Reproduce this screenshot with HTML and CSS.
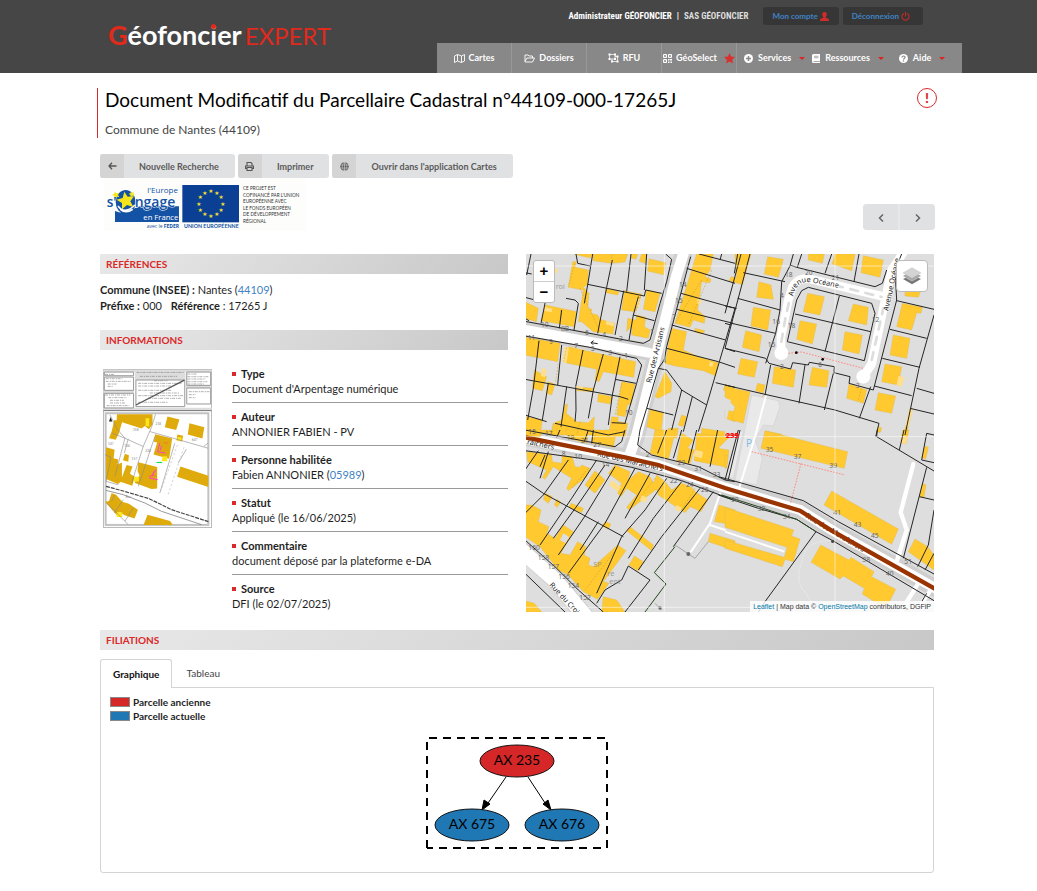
FILE: index.html
```html
<!DOCTYPE html>
<html lang="fr">
<head>
<meta charset="utf-8">
<title>Géofoncier Expert</title>
<link rel="stylesheet" href="styles.css">
</head>
<body>
<header class="site-header">
  <a class="logo" href="#"><span class="logo-g">G</span><span class="logo-name">éofonc<span class="logo-i">i</span>er</span><span class="logo-expert">EXPERT</span></a>
  <div class="header-right">
    <div class="account">
      <span class="user"><b>Administrateur GÉOFONCIER</b><b>|</b><span class="company">SAS GÉOFONCIER</span></span>
      <a class="account-btn" href="#">Mon compte <svg viewBox="0 0 16 16" width="9" height="9"><path fill="#d02c2c" d="M8 0c3 0 4 2 4 4.500 0 2-1 4-2 4.500v1l4 1.500c1.500.5 2 2 2 4.500H0c0-2.500.5-4 2-4.500L6 10V9C5 8.500 4 6.500 4 4.500 4 2 5 0 8 0z"/></svg></a>
      <a class="account-btn" href="#">Déconnexion <svg viewBox="0 0 16 16" width="9" height="9"><path fill="none" stroke="#c42a2a" stroke-width="2" d="M5 2.500a6.300 6.300 0 1 0 6 0M8 0v8"/></svg></a>
    </div>
    <nav class="main-nav">
      <a class="tile" href="#"><svg viewBox="0 0 22 18" width="11" height="9"><path fill="none" stroke="#fff" stroke-width="1.800" d="M1 4l6-3v13l-6 3zM7 1l8 3v13l-8-3M15 4l6-3v13l-6 3"/></svg>Cartes</a>
      <a class="tile" href="#"><svg viewBox="0 0 22 18" width="11" height="9"><path fill="none" stroke="#fff" stroke-width="1.800" d="M2 15V2h6l2 2h7v4M2 15l4-7h15l-4 8H2z"/></svg>Dossiers</a>
      <a class="tile" href="#"><svg viewBox="0 0 22 20" width="11" height="10"><path fill="none" stroke="#fff" stroke-width="1.500" d="M3 3h11v9H3zM14 7h5v10H8v-5"/><path fill="#fff" d="M1 1h4v4H1zM12 1h4v4h-4zM1 10h4v4H1zM12 10h4v4h-4zM17 5h4v4h-4zM17 15h4v4h-4zM6 15h4v4H6z"/></svg>RFU</a>
      <a class="tile" href="#"><svg viewBox="0 0 18 18" width="9" height="9"><path fill="none" stroke="#fff" stroke-width="2" d="M1 1h6v6H1zM11 1h6v6h-6zM1 11h6v6H1z"/><path fill="#fff" d="M3 3h2v2H3zM13 3h2v2h-2zM3 13h2v2H3zM10 10h3v3h-3zM14 10h4v3h-4zM10 15h3v3h-3zM15 15h3v3h-3z"/></svg>GéoSelect<svg class="star" viewBox="0 0 20 20" width="11" height="11"><path fill="#d6302f" d="M10 0l3 6.500 7 .8-5.200 4.900L16.200 19 10 15.600 3.800 19l1.400-6.800L0 7.300l7-.8z"/></svg></a>
      <a class="drop" href="#"><svg viewBox="0 0 18 18" width="9" height="9"><circle cx="9" cy="9" r="9" fill="#fff"/><path stroke="#888" stroke-width="3" d="M9 4v10M4 9h10"/></svg>Services<i class="caret"></i></a>
      <a class="drop" href="#"><svg viewBox="0 0 16 18" width="8" height="9"><path fill="#fff" d="M3 0h13v13l-1 1v2l1 1v1H3q-3 0-3-3V3q0-3 3-3z"/><path stroke="#888" stroke-width="1.400" d="M4 4.500h9M4 7.500h9M3 15h11"/></svg>Ressources<i class="caret"></i></a>
      <a class="drop help" href="#"><svg viewBox="0 0 18 18" width="9" height="9"><circle cx="9" cy="9" r="9" fill="#fff"/><path fill="none" stroke="#888" stroke-width="2.400" d="M6 7c0-4 6.500-4 6 0 0 2-3 2-3 4M9 12.500V15"/></svg>Aide<i class="caret"></i></a>
    </nav>
  </div>
</header>

<main class="page">
  <div class="title-row">
    <div class="title-block">
      <h1>Document Modificatif du Parcellaire Cadastral n°44109-000-17265J</h1>
      <p>Commune de Nantes (44109)</p>
    </div>
    <button class="alert" aria-label="Signaler">!</button>
  </div>

  <div class="actions">
    <button class="action"><span class="action-icon"><svg viewBox="0 0 18 16" width="9" height="8"><path fill="none" stroke="#555" stroke-width="2.600" d="M17 8H2M8 1.500L2 8l6 6.500"/></svg></span><span class="action-label">Nouvelle Recherche</span></button>
    <button class="action"><span class="action-icon"><svg viewBox="0 0 18 18" width="9" height="9"><path fill="none" stroke="#555" stroke-width="2.200" d="M4 8V1h8l2 2v5M4 13H1V8h16v5h-3M4 11h10v6H4z"/></svg></span><span class="action-label">Imprimer</span></button>
    <button class="action"><span class="action-icon"><svg viewBox="0 0 18 18" width="9" height="9"><circle cx="9" cy="9" r="8.500" fill="#5a5a5a"/><path fill="none" stroke="#d4d4d4" stroke-width="1.200" d="M0 6h18M0 12h18M9 0v18M9 0C3 5 3 13 9 18c6-5 6-13 0-18"/></svg></span><span class="action-label">Ouvrir dans l'application Cartes</span></button>
  </div>

  <div class="partner-row">
    <svg class="partner" viewBox="42 99 606 159" role="img" aria-label="L'Europe s'engage en France avec le FEDER">
      <rect x="42" y="99" width="606" height="159" fill="#fdfefb"/>
      <path fill="#1352a5" d="M75 198Q105 211 134 190L150 184H267V231H75z"/>
      <ellipse cx="107" cy="171" rx="30" ry="36" fill="#1352a5"/>
      <path fill="none" stroke="#fff" stroke-width="5" d="M84 183Q104 210 135 180M91 193Q108 207 128 193"/>
      <path fill="#f5e51b" d="M103 140l10 15 19-1-11 15 9 17-19-6-15 13 0-19-17-10 19-5z"/>
      <path fill="#f5e51b" d="M74 140l5 5 8-2-3 7 4 6-8-1-5 6-2-8-7-4 7-3zM122 139l4 4 6-1-2 6 3 5-6-1-5 4-1-6-5-4 6-2z"/>
      <g font-family="Open Sans, sans-serif" fill="#1352a5">
        <text x="172" y="143" font-size="24">l'Europe</text>
        <text x="50" y="187" font-size="41" font-weight="600">s'</text>
        <text x="134" y="187" font-size="42" font-weight="600" stroke="#fdfefb" stroke-width="3" paint-order="stroke">ngage</text>
        <text x="160" y="224" font-size="23" fill="#fff">en France</text>
        <text x="170" y="249" font-size="15">avec le <tspan font-weight="bold">FEDER</tspan></text>
        <text x="282" y="250" font-family="Lato, sans-serif" font-size="16" font-weight="bold">UNION EUROPÉENNE</text>
      </g>
      <rect x="277" y="120" width="170" height="112" fill="#0b3f94"/>
      <g fill="#f7e52a" font-size="17" font-family="DejaVu Sans, sans-serif" text-anchor="middle">
        <text x="362" y="145">★</text><text x="380" y="150">★</text><text x="393" y="163">★</text><text x="398" y="182">★</text><text x="393" y="200">★</text><text x="380" y="213">★</text><text x="362" y="218">★</text><text x="344" y="213">★</text><text x="331" y="200">★</text><text x="326" y="182">★</text><text x="331" y="163">★</text><text x="344" y="150">★</text>
      </g>
      <g font-family="Lato, sans-serif" font-size="14" fill="#333">
        <text x="459" y="135">CE PROJET EST</text><text x="459" y="155">COFINANCÉ PAR L'UNION</text><text x="459" y="174">EUROPÉENNE AVEC</text><text x="459" y="194">LE FONDS EUROPÉEN</text><text x="459" y="213">DE DÉVELOPPEMENT</text><text x="459" y="233">RÉGIONAL</text>
      </g>
    </svg>
    <div class="pager">
      <button aria-label="Précédent"><svg viewBox="0 0 12 16" width="6" height="8"><path fill="none" stroke="#666" stroke-width="3" d="M10 1L3 8l7 7"/></svg></button>
      <button aria-label="Suivant"><svg viewBox="0 0 12 16" width="6" height="8"><path fill="none" stroke="#666" stroke-width="3" d="M2 1l7 7-7 7"/></svg></button>
    </div>
  </div>

  <div class="columns">
    <div class="details">
      <h2>RÉFÉRENCES</h2>
      <div class="refs">
        <p><b>Commune (INSEE) :</b> Nantes (<a href="#">44109</a>)</p>
        <p><b>Préfixe :</b> 000 <span class="ref"><b>Référence</b> : 17265 J</span></p>
      </div>
      <h2>INFORMATIONS</h2>
      <div class="info">
        <svg class="thumb" viewBox="24 27 328 478" role="img" aria-label="Aperçu du document">
          <rect x="25" y="28" width="326" height="476" fill="#fff" stroke="#bbb" stroke-width="4"/>
          <path fill="#ddd" d="M25 29h326v7H25zM25 90h92v10H25zM120 36h152v24H120zM25 143h326v10H25zM273 76h76v8h-76z"/>
          <path fill="none" stroke="#999" stroke-width="3" d="M28 36h88v11H28zM28 51h88v40H28zM28 100h88v44H28zM123 60h147v80H123zM276 36h72v40h-72zM276 84h72v48h-72z"/>
          <path fill="none" stroke="#888" stroke-width="2" stroke-dasharray="9 3 4 2" d="M30 43h28M32 56h50M32 64h75M38 72h30M38 79h15M30 105h76M40 113h55M45 121h42M45 129h45M35 137h68M125 37h142M135 49h112M178 62h40M130 70h130M130 78h98M130 91h100M165 99h90M130 107h135M160 115h98M130 127h90M278 42h30M278 50h66M278 57h55M278 65h60M278 72h50M282 95h62M282 104h20M282 113h20"/>
          <path stroke="#555" stroke-width="4" d="M123 135L269 60"/><path stroke="#777" stroke-width="3" d="M25 152h326"/>
          <rect x="32" y="160" width="309" height="336" fill="#fff" stroke="#c2c2c2" stroke-width="6"/>
          <path fill="#dfaa0c" d="M66 163h107v30l-11 15-12-10-10 8-75-24zM58 180l24 5-10 35-10 20-20-5 8-20zM33 262l26 8-3 25 14 4-2 15 13-6v55l-12 10-36-15zM90 282l12 4-2 20-16-5zM95 316l18 4-8 22 15 9-8 27-36-12zM130 307l57 15v64l-17 2-50-18 2-10 12-12-6-14zM218 170l36 9-10 31-34-8zM284 190l45 12-6 34-44-12zM248 224l17 4-3 17-17-4zM181 223l51 13-9 61-47-13 11-36-10-2zM257 320l84 28v34l-94-31zM50 400l14 6 18 20 20 6 27 18-10 27-30-10-15-10-9 9-35-40 12-2zM158 465l68 19 8 12h-88z"/>
          <path fill="#ffe619" d="M152 175h11v24h-11zM118 351h14v14h-16zM203 289h14v15h-16zM65 458h17v14H65zM248 232h12v10h-12z"/>
          <path fill="none" stroke="#888" stroke-width="1.800" d="M45 165L67 208 90 235 145 260 170 202 182 163M52 220L90 235 60 350M145 260L110 370M180 230L130 380M165 215L340 265M30 285L48 292 33 365 70 375M240 250L195 400M340 250L327 260M100 237L88 280M60 405L50 425M85 420L58 460M115 445L90 485M35 430L100 495M275 268L250 310"/>
          <path fill="none" stroke="#444" stroke-width="3.500" stroke-dasharray="12 3" d="M33 380L82 393 163 417 230 450 341 486"/>
          <path fill="none" stroke="#666" stroke-width="2" d="M33 392L85 405 150 430 200 455 320 495"/>
          <path fill="none" stroke="#aaa" stroke-width="1.500" stroke-dasharray="7 6" d="M248 255L198 393M268 262L218 410"/>
          <path fill="none" stroke="#ff40c9" stroke-width="3" d="M195 250l-7 26 25 4M184 330l-20 25 25 5M200 258l-4 14M178 334l-5 17"/><path stroke="#f63" fill="none" stroke-width="2" d="M205 249h15M160 348h25"/><path stroke="#0d3" stroke-width="3" d="M185 308h17"/>
          <g fill="#888" font-size="10" font-family="Lato, sans-serif"><text x="182" y="195">234</text><text x="114" y="213">158</text><text x="88" y="262">156</text><text x="110" y="300">157</text><text x="151" y="276">238</text><text x="291" y="243">647</text><text x="39" y="256">147</text><text x="92" y="416">Rue</text></g>
          <path fill="#222" d="M47 171l5 14h-10z"/>
        </svg>
        <dl>
          <div><dt>Type</dt><dd>Document d'Arpentage numérique</dd></div>
          <div><dt>Auteur</dt><dd>ANNONIER FABIEN - PV</dd></div>
          <div><dt>Personne habilitée</dt><dd>Fabien ANNONIER (<a href="#">05989</a>)</dd></div>
          <div><dt>Statut</dt><dd>Appliqué (le 16/06/2025)</dd></div>
          <div><dt>Commentaire</dt><dd>document déposé par la plateforme e-DA</dd></div>
          <div><dt>Source</dt><dd>DFI (le 02/07/2025)</dd></div>
        </dl>
      </div>
    </div>

    <div class="map">
      <svg class="map-canvas" viewBox="3 12 1224 1074" preserveAspectRatio="xMidYMid slice" role="img" aria-label="Plan cadastral">
        <rect x="0" y="0" width="1240" height="1100" fill="#dedede"/>
        <g class="verge">
          <path d="M482 -10L455 75 400 290 335 555 312 620M-10 237L370 305M-10 559L300 622 400 645 600 713 825 780 920 840 1240 1020M-20 890L90 990 190 1110"/>
        </g>
        <path class="lot" d="M680 435L760 452 765 470 745 528 715 525 690 570 712 625 695 705 630 690zM640 540L655 545 625 685 605 680z"/>
        <g class="road">
          <path stroke-width="32" d="M482 -10L455 75 400 290 335 555 312 620"/>
          <path stroke-width="30" d="M-10 238L370 308"/>
          <path stroke-width="30" d="M-10 561L300 622 400 645 600 713 825 780 920 840 1240 1020"/>
          <path stroke-width="46" d="M-20 893L90 990 190 1110"/>
          <path stroke-width="26" d="M768 310L768 260 790 150 802 112Q820 78 860 88L1078 140M1015 380L1040 342 1075 175 1100 60 1140 0"/>
          <path stroke-width="13" d="M1165 642L1127 787 1145 840 1115 935M1180 1000L1130 1080M1220 1015L1190 1060"/>
          <path stroke-width="6" d="M722 440L690 560 643 712M585 730L555 820 498 905M555 825L600 840"/>
        </g>
        <circle cx="769" cy="309" r="21" fill="#fff"/><circle cx="1015" cy="380" r="21" fill="#fff"/>
        <path fill="none" stroke="#ddd" stroke-width="8" stroke-linecap="round" stroke-dasharray="24 23" d="M769 275L782 200 796 140M930 106L1070 141M1040 330L1075 175"/>
        <g class="bld">
          <path d="M148 12H202L196 24 160 16zM204 12H262L258 40 204 32zM256 12H308L300 36 264 40zM320 12H338L333 28 318 24zM350 12H365L360 40 343 34zM372 26L422 38 415 74 368 63zM143 35H154L150 52 190 60 187 104 175 112 192 130 188 175 200 178 198 190 218 195 225 208 268 220 264 252 205 245 170 215 160 215 175 120 130 112z"/>
          <path d="M298 122L348 132 342 160 330 185 290 180zM365 120L405 130 390 185 355 178zM335 195L362 202 358 230 375 240 370 265 320 255 320 228 305 245 308 205 332 210zM243 115L282 125 278 135 243 128zM0 155L40 175 34 215 0 205zM62 165L155 185 148 230 48 212z"/>
          <path d="M515 12H565L555 60 540 80 558 88 555 98 530 95 518 180 540 200 538 220 505 210 495 232 450 220zM440 235L485 245 475 300 520 320 580 338 572 378 535 362 450 348 420 340zM510 235L540 242 532 252 510 246z"/>
          <path d="M0 262L105 280 98 335 0 315zM130 290L332 335 326 382 235 365 222 395 210 390 215 358 120 338zM28 360L65 380 52 422 22 415zM68 395L90 402 80 435 65 430zM155 410L205 415 203 425 155 422zM220 432L262 440 255 462 218 455zM290 395L330 402 318 465 308 462 300 500 275 495 280 460z"/>
          <path d="M120 465L128 462 124 490 155 515 190 518 208 500 205 555 80 555 85 520 110 510zM0 500L52 510 45 560H0zM260 500L280 502 278 514 308 520 300 560H250zM420 365L440 400 438 425 400 445 390 440zM375 478L415 488 408 545 365 530zM470 495L485 500 475 530 460 525zM430 535H460L455 565 430 560zM530 535L600 545 595 565 530 560zM600 405L630 412 620 430 595 420zM600 480L630 485V515L600 505z"/>
        </g>
        <g class="bld" transform="translate(600 0)">
          <path d="M30 12H78L52 104 12 92 18 80 35 83zM128 20L175 28 160 82 118 72zM102 95L138 105 145 148 95 142zM85 172L137 180 128 240 78 228zM62 242L110 255 102 305 52 292zM48 325L98 335 88 382 38 372zM250 12H298L292 40 250 30zM330 12H390L380 62 322 42zM415 17L475 30 465 82 408 68z"/>
          <path d="M248 130L298 140 285 195 235 185zM225 212L275 222 262 282 215 268zM385 162L430 172 425 225 370 212zM360 245L412 255 402 312 352 300zM540 115L588 120 580 142 540 138zM532 160L592 172 588 190 575 188 560 240 515 230zM505 255L555 265 545 325 495 315zM480 342L530 350 520 405 470 395zM460 428L512 438 500 490 450 480zM148 350L212 360 205 412 142 400zM262 352L312 362 305 412 252 405zM372 402L425 420 415 460 365 445zM98 400L120 405 115 430 92 422zM0 410L75 425 55 520 20 510 30 470 0 440zM555 475L562 480 545 550 538 545zM122 543L170 553V558H120zM460 530L470 533 465 548 460 545z"/>
        </g>
        <g class="bld" transform="translate(0 540)">
          <path d="M0 0H105L102 15 50 8 45 22 0 8zM120 0H275L265 52 200 40 205 0 190 0 185 40 130 25zM390 0H452L430 88 375 70zM470 10L505 30 488 55 508 60 495 102 455 95zM515 10L612 22 580 55 612 60 605 112 508 92z"/>
          <path d="M5 65L80 75 82 95 110 100 112 75 142 82 150 110 165 112 170 105 195 115 185 140 130 182 125 175 140 145 100 120 85 110 60 148 52 142 65 120 8 95zM210 122L240 150 210 190 180 165zM270 105L315 125 310 150 340 125 375 140 385 160 395 135 420 155 440 180 470 160 500 172 510 185 548 210 528 245 495 230 480 248 400 195 395 178 365 200 312 240 305 232 335 195 305 175 288 200 278 190 290 160 250 130zM62 190L82 200 70 220 55 208zM95 208L107 215 97 232 88 225zM138 220L175 235 170 248 132 232zM240 275L258 282 250 298 232 288zM315 290L385 345 380 362 305 302zM328 378L355 395 340 424 312 405z"/>
          <path d="M0 225H20L48 240 40 275 72 290 65 310 90 325 115 285 145 305 130 330 108 370 135 375 158 335 182 350 178 375 195 385 190 405 205 410 278 345 303 362 235 455 252 460 218 508 175 485 130 435 100 420 45 350 0 320zM235 500L275 510 300 546H230zM0 512L28 520 50 546H0zM582 225L630 240V285L568 275zM555 310L630 332V362L550 335z"/>
        </g>
        <g class="bld" transform="translate(600 540)">
          <path d="M120 2L368 65 358 115 108 55zM320 183L520 297 500 343 297 225zM0 232L206 300 200 318 225 327 205 395 180 388 172 410 0 355V330L178 382 186 352 0 292zM287 345L372 390 378 382 447 425 440 440 512 478 490 522H460L412 492 418 475 355 438 345 447 258 397zM570 327L608 350 627 375V420L550 365zM533 0H552L543 42 527 38zM600 48L610 52 602 88 590 82zM592 160L603 165 597 202 585 200zM0 75L10 77 5 115H0zM455 0H468L465 7 455 5z"/>
        </g>
        <path fill="none" stroke="#fff" stroke-width="6" d="M600 845L778 905"/>
        <path fill="#dedede" d="M128 115L150 118 155 130 130 128zM105 870L115 850 132 860 122 880zM210 515L250 525 235 540 208 535zM600 445L618 450 605 510 600 505z"/>
        <path fill="#ffdf8c" d="M60 172L82 176 80 187 58 183zM118 290L132 293 124 340 112 336zM50 355L65 358 60 382 48 378zM335 145L347 148 342 172 333 170zM244 213L268 219 265 229 242 223zM155 407L175 412 170 420 153 416zM518 145L530 148 527 163 515 160zM555 335L566 338 562 350 552 348zM260 690L288 712 278 725 252 705zM512 600L535 605 530 625 506 618zM350 735L368 745 360 758 345 750zM455 765L472 775 462 785 450 778zM1120 378L1138 382 1130 410 1115 406zM1155 475L1164 480 1150 530 1140 528zM85 55L100 58 95 70 82 67zM1130 558L1148 562 1143 582 1127 578z"/>
        <path fill="none" stroke="#c49b2d" stroke-width="1.500" stroke-dasharray="6 4" d="M165 115L225 245M42 275L36 320M125 292L116 335M175 300L165 350M232 312L220 365M285 325L275 375M100 340L92 395M350 130L330 190M560 60L490 225M530 90L450 220M85 520L75 560M165 515L155 555M290 400L270 495M150 40L130 110M108 180L105 220M215 545L204 580M140 620L100 665M190 655L140 715M390 685L320 775M510 715L470 780M280 890L180 1020M1010 415L1000 450M725 430L712 440"/>
        <g class="parcels">
          <path d="M18 12L5 75M78 70L48 220M48 155L0 142M0 68L20 72M153 12L158 40 195 48M203 12L188 105 178 160M188 103L358 138 362 120 410 130M262 30L245 112 218 250M318 12L305 125M365 12L358 120M296 122L270 255M340 140L325 195 312 270M325 195L388 212M422 12L440 28 425 95 405 160 375 270 355 280 310 272 205 252 0 214M123 145L150 150 160 160 147 240M110 180L103 235M0 205L12 212M0 258L195 292 290 315 335 325 350 345 335 400 300 520M42 272L25 415 8 510M110 285L98 405M174 300L152 410M235 312L205 420 190 505M285 320L262 435 250 525M0 388L110 408 285 440 310 448M270 388L333 400M125 410L108 530M152 412L153 480 150 515M70 400L52 510M260 518L302 520M90 520L250 555 300 545"/>
          <path d="M497 20L425 290 418 330 400 355 425 360 470 420 545 465M522 12L630 40M485 55L630 100M468 130L630 175M455 178L625 220M440 225L602 270M425 295L580 335 630 352M630 175L545 465 520 545M470 420L440 540M365 475L445 495M502 440L475 545M400 355L365 475 345 540M572 398L630 412M590 12L585 30M600 295L630 305M640 0L628 70M0 495L65 515"/>
          <path transform="translate(600 0)" d="M48 12L0 190M75 12L0 295M55 68L180 95M38 145L165 180M20 220L152 250M0 295L122 325 132 340 197 357 203 338 250 345 253 337 328 350 327 368 375 380 372 400 445 420M205 12L195 48 170 95 165 180 152 250 122 340M195 45L215 52 450 110 472 100 485 60M230 12L217 52M320 12L300 70M402 12L387 95M530 12L510 60 515 150 445 420M515 152L627 178M495 238L605 265M472 325L585 352M448 408L560 437M250 112L230 122 215 150 187 275 418 332 450 190 440 160 420 155 250 112M343 138L300 305M210 192L437 245M0 405L120 433 330 480 462 520 452 560M137 345L120 435M240 345L222 460M325 370L298 480M437 410L403 505M627 195L582 355 540 555M575 415L627 430M555 475L627 492M0 168L35 175M0 220L18 225"/>
          <path transform="translate(0 540)" d="M0 62L205 90 320 112 425 140 470 152 545 180 630 212M130 90L55 195 0 250M40 62L0 120M60 75L45 110M215 90L140 205 45 345M240 105L165 215 85 325M270 110L180 258 100 375M330 115L240 280 130 430M375 130L300 265M425 145L360 240 290 320 215 490M470 155L385 265 310 385M525 175L410 320 340 420M565 185L445 350M0 152L55 190 295 320M220 275L165 360M310 408L375 450M310 408L290 450 240 480 215 520M0 330L95 415 160 480 235 546M375 450L300 546M345 0L338 45 380 75 520 110 600 150M300 0L290 35 270 50 0 0M105 0L95 22M190 0L178 35M205 0L200 40M70 65L45 145M425 0L398 70M470 0L445 85M515 0L490 100M578 0L555 110M640 0L600 150 630 155M0 430L120 546"/>
          <path transform="translate(600 540)" d="M-20 140L10 148 235 212 340 275 627 432M10 148L45 0M273 305L120 515 100 546M-20 195L100 235 215 268 273 305 325 333 430 395 627 512M457 0L455 20 627 123M537 0L523 60M605 112L535 385M583 200L627 210M627 15L605 10 590 90 627 98M627 240L610 345 578 410M627 370L600 420M605 490L590 515"/>
        </g>
        <path fill="none" stroke="#23471d" stroke-width="3" d="M450 890L388 968 423 1002 360 1086M590 735L700 770 815 808 873 845"/>
        <path fill="none" stroke="#888" stroke-width="2" d="M450 885L510 925 550 875M390 1060L410 1080"/>
        <path fill="none" stroke="#fff" stroke-width="3" stroke-dasharray="2 5" d="M930 873Q845 865 832 930 810 990 835 1020L860 1055 900 1065"/>
        <path fill="none" stroke="#ff8a80" stroke-width="3" stroke-dasharray="5 4" d="M680 605L960 675M828 640L797 758M790 310L830 306 1015 355"/>
        <circle cx="814" cy="308" r="4"/><circle cx="893" cy="328" r="4"/><circle cx="923" cy="874" r="5" fill="#444"/><circle cx="490" cy="912" r="6" fill="#666"/><circle cx="405" cy="1074" r="5" fill="#666"/>
        <g class="street-label">
          <text x="5" y="582" transform="rotate(12 5 582)">raîchers</text>
          <text x="215" y="618" transform="rotate(13 215 618)">Rue des Maraîchers</text>
          <text x="840" y="802" transform="rotate(31 840 802)">Rue des Maraîchers</text>
        </g>
        <path fill="none" stroke="#993300" stroke-width="13" d="M-10 560L300 622 400 645 600 714 825 782 920 842 1240 1022"/>
        <g class="street-label">
          <text x="378" y="400" transform="rotate(-76 378 400)">Rue des Artisans</text>
          <text x="72" y="1006" transform="rotate(47 72 1006)">Rue du Croi</text>
          <path id="oceane" fill="none" stroke="none" d="M805 140Q812 90 860 97L990 124"/>
          <text><textPath href="#oceane">Avenue Océane</textPath></text>
          <text x="1090" y="184" transform="rotate(-78 1090 184)">Avenue Océane</text>
        </g>
        <path fill="none" stroke="#222" stroke-width="3" d="M218 281L198 278M206 272L198 278 204 284"/>
        <g class="numbers">
          <text x="48" y="232">10</text><text x="108" y="243">8B</text><text x="180" y="254">6</text><text x="232" y="262">4</text><text x="282" y="274">2</text><text x="8" y="270">11</text><text x="72" y="281">9</text><text x="148" y="294">7</text><text x="198" y="303">5</text><text x="250" y="314">3</text><text x="298" y="324">1</text><text x="300" y="495">10</text><text x="375" y="252">1</text><text x="462" y="110">14</text><text x="450" y="160">15</text><text x="442" y="208">7</text><text x="412" y="338">4</text>
          <text x="10" y="553">15</text><text x="60" y="558">17</text><text x="125" y="570">19</text><text x="168" y="580">21</text><text x="205" y="592">27</text><text x="110" y="618">8</text><text x="148" y="626">10</text><text x="230" y="652">14</text><text x="435" y="698">22</text><text x="483" y="712">24</text><text x="528" y="727">26</text><text x="618" y="757">30</text><text x="698" y="782">32</text><text x="773" y="806">34</text><text x="458" y="646">29</text><text x="508" y="663">31</text><text x="563" y="680">33</text><text x="362" y="622">2</text>
          <text x="722" y="607">35</text><text x="806" y="628">37</text><text x="913" y="653">39</text><text x="925" y="794">41</text><text x="986" y="832">43</text><text x="1038" y="864">45</text><text x="1138" y="943">51</text><text x="1012" y="936">38</text><text x="1083" y="977">40</text>
          <text x="780" y="82">18</text><text x="840" y="74">20</text><text x="920" y="90">21</text><text x="765" y="145">4</text><text x="742" y="222">16</text><text x="728" y="292">15</text><text x="788" y="235">18</text><text x="1040" y="215">12</text><text x="765" y="356">2</text><text x="880" y="350">6</text><text x="992" y="415">3</text>
          <text x="10" y="900">160</text><text x="38" y="930">158</text><text x="68" y="958">157</text><text x="100" y="987">156</text><text x="128" y="1014">154</text><text x="163" y="1051">152</text>
        </g>
        <g font-family="Noto Sans, sans-serif" font-size="22" fill="#888" opacity=".75"><text x="92" y="117">roi</text><text x="205" y="950">SP</text><text x="247" y="978">re</text><text x="253" y="1003">ent</text></g>
        <text x="663" y="590" font-family="Open Sans, sans-serif" font-size="30" fill="#7bbbe5">P</text>
        <path fill="none" stroke="#fff" stroke-width="2.500" opacity=".65" d="M418 12V1086M930 12V1086M3 48H1227M3 560H1227M3 1072H1227"/>
        <path stroke="#f00" stroke-width="3" d="M600 555H642"/><text x="602" y="563" fill="#f00" font-family="Open Sans, sans-serif" font-size="23" font-weight="bold">235</text>
      </svg>
      <div class="zoom"><button aria-label="Zoom avant">+</button><button aria-label="Zoom arrière">−</button></div>
      <button class="layers" aria-label="Couches"><svg viewBox="0 0 52 52" width="18" height="18"><path fill="#777" d="M0 35l26 15 26-15-8-4-18 10L8 31z"/><path fill="#aaa" d="M0 26l26 15 26-15-8-5-18 11L8 21z"/><path fill="#d4d4d4" stroke="#aaa" d="M0 17L26 2l26 15-26 15z"/></svg></button>
      <div class="attribution"><a href="#">Leaflet</a> | Map data © <a href="#">OpenStreetMap</a> contributors, DGFiP</div>
    </div>
  </div>

  <section class="filiations">
    <h2>FILIATIONS</h2>
    <div class="tabs" role="tablist"><button class="tab active" role="tab" aria-selected="true">Graphique</button><button class="tab" role="tab" aria-selected="false">Tableau</button></div>
    <div class="panel" role="tabpanel">
      <ul class="legend"><li><i class="swatch old"></i>Parcelle ancienne</li><li><i class="swatch current"></i>Parcelle actuelle</li></ul>
      <svg class="graph" viewBox="0 0 182 114" width="182" height="114">
        <path fill="none" stroke="#000" stroke-width="2" stroke-dasharray="8 6" d="M1 111V1h180v110H1"/>
        <path fill="none" stroke="#000" d="M80 40L60 69M102 40L121 69"/><path d="M56 73l2-10 6 4zM125 73l-8-6 5-4z" stroke="#000"/>
        <g stroke="#111"><ellipse cx="91" cy="24" rx="37" ry="16" fill="#d62728"/><ellipse cx="46" cy="88" rx="37" ry="16" fill="#1f77b4"/><ellipse cx="136" cy="88" rx="37" ry="16" fill="#1f77b4"/></g>
        <g font-family="Lato, sans-serif" font-size="14" text-anchor="middle"><text x="91" y="28">AX 235</text><text x="46" y="92">AX 675</text><text x="136" y="92">AX 676</text></g>
      </svg>
    </div>
  </section>
</main>
</body>
</html>
```
FILE: styles.css
```css
* { box-sizing: border-box; }
body { margin: 0; background: #fff; color: #1f1f1f; font: 11px/16px Lato, sans-serif; }
h1, h2, p, dl, dd, ul { margin: 0; padding: 0; }
button { font-family: inherit; border: 0; padding: 0; cursor: pointer; }
a { color: #4183c4; text-decoration: none; }

.site-header { display: flex; justify-content: space-between; background: #464646; padding: 0 75px 0 108px; }
.logo { display: flex; align-items: baseline; margin-top: 20px; line-height: 30px; font-size: 27px; font-weight: bold; color: #fff; }
.logo-g, .logo-expert { color: #e1291c; }
.logo-i { position: relative; }
.logo-i::after { content: ""; position: absolute; left: 1px; top: 6px; width: 5px; height: 5px; border-radius: 50%; background: #e1291c; }
.logo-expert { margin-left: 3px; font-size: 24px; font-weight: normal; }
.header-right { display: flex; flex-direction: column; }
.account { display: flex; justify-content: flex-end; align-items: center; gap: 4px; padding: 7px 39px 18px 0; }
.user { display: flex; gap: 5px; margin-right: 11px; color: #fff; font: 9px/18px "Roboto Condensed", "Liberation Sans Narrow", Roboto, sans-serif; }
.company { color: #ddd; font-weight: bold; }
.account-btn { display: flex; align-items: center; gap: 2px; height: 18px; padding: 0 10px 0 9px; border-radius: 3px; background: #363636; font-size: 8px; font-weight: bold; }
.account-btn + .account-btn { padding-right: 13px; }
.main-nav { display: flex; width: 525px; height: 30px; background: #888; }
.main-nav a { display: flex; flex: none; align-items: center; gap: 4px; color: #fff; font-size: 9px; font-weight: bold; }
.main-nav .tile { justify-content: center; width: 75px; border-right: 1px solid #999; }
.main-nav .star { margin-left: 3px; }
.main-nav .drop { padding-left: 7px; gap: 5px; }
.main-nav .help { padding-left: 15px; }
.caret { width: 0; margin-left: 3px; border: 3px solid transparent; border-top-color: #d22; border-bottom: 0; }

.page { padding: 15px 103px 18px 100px; }
.title-row { display: flex; justify-content: space-between; align-items: flex-start; margin-left: -3px; margin-right: -3px; }
.title-block { height: 50px; border-left: 1px solid #db2828; padding-left: 7px; }
h1 { font-size: 19px; line-height: 24px; font-weight: normal; color: #000; }
.title-block p { margin-top: 10px; font-size: 12px; color: #444; }
.alert { width: 20px; height: 20px; border: 1px solid #db2828; border-radius: 50%; background: #fff; color: #db2828; font-size: 14px; line-height: 18px; font-weight: 900; }
.actions { display: flex; gap: 3px; margin-top: 16px; }
.action { display: flex; height: 24px; overflow: hidden; border-radius: 3px; background: #e0e1e2; color: #5a5a5a; font-size: 9px; font-weight: bold; }
.action-icon { display: flex; align-items: center; justify-content: center; width: 24px; height: 24px; background: #d4d4d5; }
.action-label { padding: 0 16px 0 15px; line-height: 25px; }
.partner-row { display: flex; justify-content: space-between; align-items: flex-end; }
.partner { width: 202px; height: 53px; margin-left: 4px; }
.pager { display: flex; gap: 2px; margin: 0 -1px 1px 0; border-radius: 4px; overflow: hidden; background: #e8e8e8; }
.pager button { width: 35px; height: 26px; background: #e0e1e2; }

.columns { display: grid; grid-template-columns: 1fr 1fr; gap: 18px; margin-top: 23px; }
h2 { height: 20px; padding-left: 6px; background: linear-gradient(135deg, #e8e8e8, #c8c8c8); color: #db2828; font-size: 10px; line-height: 20px; font-weight: bold; }
.refs { padding: 8px 0 16px; }
.ref { margin-left: 6px; }
.info { display: flex; gap: 20px; padding: 16px 0 0 3px; }
.thumb { width: 109px; height: 159px; margin-top: 3px; flex: none; }
dl { flex: 1; }
dl div { border-bottom: 1px solid #999; padding-bottom: 6px; margin-bottom: 6px; line-height: 15px; }
dl div:last-child { border: 0; margin: 0; padding: 0; }
dt { display: flex; align-items: center; gap: 5px; font-weight: bold; }
dt::before { content: ""; width: 4px; height: 4px; background: #db2828; }

.map { position: relative; height: 358px; overflow: hidden; background: #dedede; }
.map-canvas { display: block; width: 100%; height: 100%; }
.verge path { fill: none; stroke: #cfcfcf; stroke-width: 52px; }
.lot { fill: #e9e9e9; stroke: #d2d2d2; stroke-width: 2px; }
.road { fill: none; stroke: #fff; stroke-linejoin: round; stroke-linecap: round; }
.bld { fill: #ffc92f; stroke: #d8b34e; stroke-width: 1px; }
.parcels { fill: none; stroke: #252525; stroke-width: 3px; }
.street-label { font: 22px "Noto Sans", sans-serif; fill: #222; stroke: #fff; stroke-width: 3px; paint-order: stroke; }
.numbers { font: 20px "Noto Sans", sans-serif; fill: #666; }
.zoom { position: absolute; left: 7px; top: 6px; display: flex; flex-direction: column; gap: 1px; border: 1px solid #bbb; border-radius: 3px; background: #ccc; overflow: hidden; }
.zoom button { width: 20px; height: 20px; background: #fff; color: #000; font: bold 15px/20px "Liberation Sans", sans-serif; }
.layers { position: absolute; right: 6px; top: 6px; display: flex; align-items: center; justify-content: center; width: 32px; height: 32px; border: 1px solid #bbb; border-radius: 4px; background: #fff; }
.attribution { position: absolute; right: 0; bottom: 0; padding: 0 3px; background: rgba(255, 255, 255, .8); color: #333; font: 7px/11px "Liberation Sans", sans-serif; }
.attribution a { color: #0078a8; }

.filiations { margin-top: 18px; }
.tabs { display: flex; margin-top: 9px; }
.tab { height: 28px; padding: 0 14px; background: #fff; color: #444; font-size: 10px; line-height: 28px; }
.tab.active { height: 29px; margin-bottom: -1px; padding: 0 12px; border: 1px solid #d4d4d5; border-bottom: 0; border-radius: 3px 3px 0 0; color: #111; font-weight: bold; z-index: 1; }
.panel { border: 1px solid #d4d4d5; border-radius: 0 0 3px 3px; padding: 7px 9px 21px; }
.legend { list-style: none; font-size: 10px; line-height: 14px; font-weight: bold; }
.legend li { display: flex; align-items: center; gap: 3px; }
.swatch { width: 20px; height: 10px; border: 1px solid #888; }
.old { background: #d62728; }
.current { background: #1f77b4; }
.graph { display: block; margin: 14px auto 0; }
```
